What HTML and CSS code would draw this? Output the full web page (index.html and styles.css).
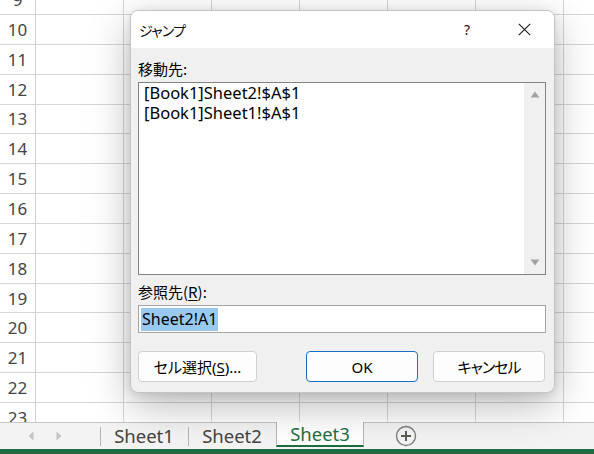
FILE: index.html
```html
<!DOCTYPE html>
<html lang="ja">
<head>
<meta charset="utf-8">
<link rel="stylesheet" href="styles.css">
</head>
<body>
<div class="app">
  <div class="sheet">
    <div class="row"><div class="rh">9</div><div class="c"></div><div class="c"></div><div class="c"></div><div class="c"></div><div class="c"></div><div class="c"></div><div class="c"></div></div>
    <div class="row"><div class="rh">10</div><div class="c"></div><div class="c"></div><div class="c"></div><div class="c"></div><div class="c"></div><div class="c"></div><div class="c"></div></div>
    <div class="row"><div class="rh">11</div><div class="c"></div><div class="c"></div><div class="c"></div><div class="c"></div><div class="c"></div><div class="c"></div><div class="c"></div></div>
    <div class="row"><div class="rh">12</div><div class="c"></div><div class="c"></div><div class="c"></div><div class="c"></div><div class="c"></div><div class="c"></div><div class="c"></div></div>
    <div class="row"><div class="rh">13</div><div class="c"></div><div class="c"></div><div class="c"></div><div class="c"></div><div class="c"></div><div class="c"></div><div class="c"></div></div>
    <div class="row"><div class="rh">14</div><div class="c"></div><div class="c"></div><div class="c"></div><div class="c"></div><div class="c"></div><div class="c"></div><div class="c"></div></div>
    <div class="row"><div class="rh">15</div><div class="c"></div><div class="c"></div><div class="c"></div><div class="c"></div><div class="c"></div><div class="c"></div><div class="c"></div></div>
    <div class="row"><div class="rh">16</div><div class="c"></div><div class="c"></div><div class="c"></div><div class="c"></div><div class="c"></div><div class="c"></div><div class="c"></div></div>
    <div class="row"><div class="rh">17</div><div class="c"></div><div class="c"></div><div class="c"></div><div class="c"></div><div class="c"></div><div class="c"></div><div class="c"></div></div>
    <div class="row"><div class="rh">18</div><div class="c"></div><div class="c"></div><div class="c"></div><div class="c"></div><div class="c"></div><div class="c"></div><div class="c"></div></div>
    <div class="row"><div class="rh">19</div><div class="c"></div><div class="c"></div><div class="c"></div><div class="c"></div><div class="c"></div><div class="c"></div><div class="c"></div></div>
    <div class="row"><div class="rh">20</div><div class="c"></div><div class="c"></div><div class="c"></div><div class="c"></div><div class="c"></div><div class="c"></div><div class="c"></div></div>
    <div class="row"><div class="rh">21</div><div class="c"></div><div class="c"></div><div class="c"></div><div class="c"></div><div class="c"></div><div class="c"></div><div class="c"></div></div>
    <div class="row"><div class="rh">22</div><div class="c"></div><div class="c"></div><div class="c"></div><div class="c"></div><div class="c"></div><div class="c"></div><div class="c"></div></div>
    <div class="row"><div class="rh">23</div><div class="c"></div><div class="c"></div><div class="c"></div><div class="c"></div><div class="c"></div><div class="c"></div><div class="c"></div></div>
  </div>

  <div class="tabbar">
    <div class="nav">
      <svg class="arrow" width="6" height="10" viewBox="0 0 6 10"><polygon points="5.5,0.5 0.5,5 5.5,9.5" fill="#c4c4c4"/></svg>
      <svg class="arrow" width="6" height="10" viewBox="0 0 6 10"><polygon points="0.5,0.5 5.5,5 0.5,9.5" fill="#c4c4c4"/></svg>
    </div>
    <div class="tab sep">Sheet1</div>
    <div class="tab sep">Sheet2</div>
    <div class="tab active">Sheet3</div>
    <div class="add">
      <svg width="22" height="22" viewBox="0 0 22 22">
        <circle cx="11" cy="11" r="9.5" fill="none" stroke="#7d7d7d" stroke-width="1.4"/>
        <path d="M11 6v10M6 11h10" stroke="#5a5a4e" stroke-width="2"/>
      </svg>
    </div>
  </div>
  <div class="statusbar"></div>

  <div class="dialog">
    <div class="titlebar">
      <span class="title">ジャンプ</span>
      <span class="help">?</span>
      <svg class="close" width="13" height="13" viewBox="0 0 13 13"><path d="M0.8 0.8L12.2 12.2M12.2 0.8L0.8 12.2" stroke="#1a1a1a" stroke-width="1.1"/></svg>
    </div>
    <div class="body">
      <div class="label">移動先:</div>
      <div class="listbox">
        <div class="items">
          <div class="item">[Book1]Sheet2!$A$1</div>
          <div class="item">[Book1]Sheet1!$A$1</div>
        </div>
        <div class="scroll">
          <svg width="10" height="7" viewBox="0 0 10 7"><polygon points="5,0.5 9.5,6.5 0.5,6.5" fill="#a3a3a3"/></svg>
          <svg width="10" height="7" viewBox="0 0 10 7"><polygon points="0.5,0.5 9.5,0.5 5,6.5" fill="#a3a3a3"/></svg>
        </div>
      </div>
      <div class="label label2">参照先(<u>R</u>):</div>
      <div class="input"><span class="sel">Sheet2!A1</span></div>
      <div class="buttons">
        <div class="btn btn-select">セル選択(<u>S</u>)...</div>
        <div class="btn btn-ok">OK</div>
        <div class="btn btn-cancel">キャンセル</div>
      </div>
    </div>
  </div>
</div>
</body>
</html>
```

FILE: styles.css
```css
html, body {
  margin: 0;
  padding: 0;
}
body {
  width: 594px;
  height: 454px;
  overflow: hidden;
  background: #fff;
  font-family: "Noto Sans", "Noto Sans CJK JP", sans-serif;
  font-feature-settings: "palt";
}
.app {
  position: relative;
  width: 594px;
  height: 454px;
  display: flex;
  flex-direction: column;
}
.sheet {
  height: 422px;
  overflow: hidden;
  flex: none;
}
.row {
  display: flex;
  height: 29.85px;
  box-sizing: border-box;
  border-bottom: 1px solid #d6d6d6;
}
.row:first-child {
  margin-top: -14.85px;
}
.rh {
  width: 36px;
  flex: none;
  box-sizing: border-box;
  border-right: 1px solid #cfcfcf;
  display: flex;
  align-items: center;
  justify-content: center;
  font-size: 17px;
  color: #444;
}
.c {
  width: 88px;
  flex: none;
  box-sizing: border-box;
  border-right: 1px solid #d6d6d6;
}

.tabbar {
  height: 27px;
  flex: none;
  box-sizing: border-box;
  border-top: 1px solid #c6c6c6;
  background: #f3f3f3;
  display: flex;
  align-items: stretch;
}
.nav {
  width: 100px;
  flex: none;
  display: flex;
  align-items: center;
  padding-left: 28px;
  gap: 22px;
  box-sizing: border-box;
}
.arrow {
  display: block;
}
.tab {
  width: 88px;
  flex: none;
  box-sizing: border-box;
  display: flex;
  align-items: center;
  justify-content: center;
  font-size: 18.5px;
  color: #444;
  padding-bottom: 2px;
}
.tab.sep {
  position: relative;
}
.tab.sep::before {
  content: "";
  position: absolute;
  left: 0;
  top: 4px;
  height: 19px;
  border-left: 1px solid #b4b4b4;
}
.tab.active {
  width: 88px;
  margin-top: -1px;
  height: 25px;
  background: #fff;
  border-left: 1px solid #b4b4b4;
  border-right: 1px solid #b4b4b4;
  border-bottom: 2px solid #1e6e42;
  color: #1f6f44;
  padding-bottom: 0;
}
.add {
  margin-left: 31px;
  display: flex;
  align-items: center;
}
.add svg {
  display: block;
}
.statusbar {
  height: 5px;
  flex: none;
  background: #1f6e43;
}

.dialog {
  position: absolute;
  left: 130px;
  top: 10px;
  width: 425px;
  height: 383px;
  box-sizing: border-box;
  border: 1px solid #c4c4c4;
  border-radius: 8px;
  background: #f0f0f0;
  box-shadow: 0 12px 40px rgba(0, 0, 0, 0.28), 0 2px 10px rgba(0, 0, 0, 0.10);
  display: flex;
  flex-direction: column;
  overflow: hidden;
  color: #000;
}
.titlebar {
  height: 37px;
  flex: none;
  background: #fff;
  display: flex;
  align-items: center;
  padding-left: 8px;
  padding-right: 23px;
  font-size: 14px;
}
.title {
  font-family: "Noto Sans CJK JP", sans-serif;
  flex: 1;
  color: #111;
  font-size: 14px;
  letter-spacing: -0.8px;
}
.help {
  font-size: 14px;
  margin-right: 48px;
  color: #111;
}
.close {
  display: block;
}
.body {
  flex: 1;
  display: flex;
  flex-direction: column;
  padding: 12px 8px 0 7px;
}
.label {
  font-size: 15px;
  line-height: 18px;
  height: 18px;
  margin-bottom: 4px;
  font-family: "Noto Sans CJK JP", sans-serif;
}
.label2 {
  margin-top: 8px;
}
.listbox {
  height: 193px;
  box-sizing: border-box;
  border: 1px solid #838383;
  background: #fff;
  display: flex;
}
.items {
  flex: 1;
  padding: 0 0 0 5px;
}
.item {
  font-size: 16.5px;
  line-height: 20px;
  white-space: nowrap;
}
.scroll {
  width: 21px;
  flex: none;
  background: #f0f0f0;
  display: flex;
  flex-direction: column;
  align-items: center;
  justify-content: space-between;
  padding: 8px 0 8px 0;
}
.scroll svg {
  display: block;
}
.input {
  height: 28px;
  box-sizing: border-box;
  border: 1px solid #a5a5a5;
  background: #fff;
  padding: 1px 2px;
  display: flex;
  align-items: center;
}
.sel {
  background: #99c9ef;
  font-size: 16px;
  line-height: 23px;
  padding: 0 1px;
}
.buttons {
  margin-top: 18px;
  display: flex;
  align-items: center;
}
.btn {
  height: 31px;
  box-sizing: border-box;
  border: 1px solid #d0d0d0;
  border-radius: 4px;
  background: #fdfdfd;
  display: flex;
  align-items: center;
  justify-content: center;
  font-size: 15px;
}
.btn-select {
  width: 119px;
}
.btn-ok {
  width: 112px;
  margin-left: auto;
  border: 1.5px solid #1a6fc4;
}
.btn-cancel {
  width: 112px;
  margin-left: 15px;
  margin-right: 1px;
  letter-spacing: -1px;
}
u {
  text-underline-offset: 2px;
}
```
